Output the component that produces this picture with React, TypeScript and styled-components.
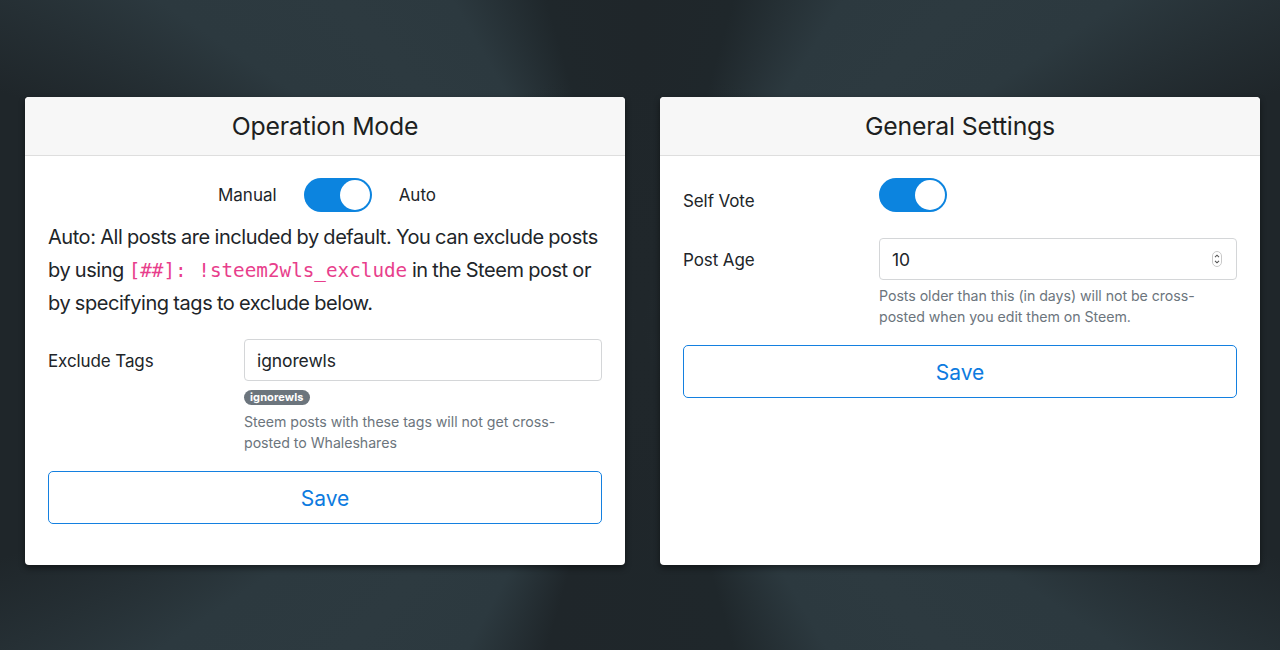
import React from "react";
import styled, { createGlobalStyle } from "styled-components";

const GlobalStyle = createGlobalStyle`
  html, body { margin: 0; padding: 0; }
  body {
    width: 1280px;
    height: 650px;
    overflow: hidden;
    font-family: Inter, "Noto Sans", "Liberation Sans", sans-serif;
    color: #212529;
    background-color: #1f262a;
    background-image:
      radial-gradient(circle at 50% 50%, #20272b 0px, rgba(32, 39, 43, 0.9) 90px, rgba(32, 39, 43, 0) 260px),
      conic-gradient(from 0deg at 50% 50%,
        #1f262a 0deg, #1f272b 16deg, #2c393f 32deg, #2d3a40 45deg, #2c393f 56deg, #1f262a 70deg,
        #1f262a 110deg, #2c393f 124deg, #2d3a40 137deg, #2c393f 150deg, #1f272b 164deg,
        #1f262a 196deg, #2c393f 208deg, #2d3a40 222deg, #2c393f 236deg, #1f262a 250deg,
        #1f262a 290deg, #2c393f 304deg, #2d3a40 317deg, #2c393f 330deg, #1f272b 344deg, #1f262a 360deg);
  }
`;

const Page = styled.main`
  display: grid;
  grid-template-columns: 600px 600px;
  column-gap: 35px;
  align-items: stretch;
  padding: 97px 0 0 25px;
  height: 468px;
`;

const Card = styled.section`
  background: #ffffff;
  border-radius: 4px;
  box-shadow: 0 3px 6px rgba(0, 0, 0, 0.45);
  display: flex;
  flex-direction: column;
  overflow: hidden;
`;

const CardHeader = styled.header`
  height: 58px;
  flex: none;
  background: #f7f7f7;
  border-bottom: 1px solid #dedede;
  display: flex;
  align-items: center;
  justify-content: center;
`;

const Title = styled.h2`
  margin: 0;
  font-size: 24.8px;
  font-weight: 400;
  letter-spacing: -0.2px;
  color: #1d1f21;
`;

const CardBody = styled.div`
  padding: 22px 23px 40px 23px;
  display: flex;
  flex-direction: column;
`;

const ToggleRow = styled.div`
  height: 34px;
  display: flex;
  align-items: center;
  justify-content: center;
  gap: 27px;
  font-size: 17px;
  padding-left: 4px;
`;

const Track = styled.span<{ $on: boolean }>`
  width: 68px;
  height: 34px;
  box-sizing: border-box;
  border-radius: 17px;
  background: ${(p) => (p.$on ? "#0c84df" : "#d6d6d6")};
  padding: 2px;
  display: flex;
  justify-content: ${(p) => (p.$on ? "flex-end" : "flex-start")};
  flex: none;
`;

const Knob = styled.span`
  width: 30px;
  height: 30px;
  border-radius: 50%;
  background: #ffffff;
`;

const Toggle = ({ on }: { on: boolean }) => (
  <Track $on={on}>
    <Knob />
  </Track>
);

const Paragraph = styled.p`
  margin: 9px 0 0 0;
  font-size: 20px;
  line-height: 33px;
  letter-spacing: -0.45px;
  word-spacing: -0.5px;
`;

const Code = styled.code`
  font-family: "DejaVu Sans Mono", "Liberation Mono", monospace;
  font-size: 19.3px;
  letter-spacing: 0;
  word-spacing: 0;
  white-space: nowrap;
  color: #e83e8c;
`;

const FieldRow = styled.div<{ $mt: number }>`
  display: grid;
  grid-template-columns: 196px 1fr;
  margin-top: ${(p) => p.$mt}px;
`;

const Label = styled.label<{ $pt: number }>`
  font-size: 17px;
  line-height: 25px;
  padding-top: ${(p) => p.$pt}px;
  letter-spacing: -0.1px;
`;

const Field = styled.div`
  display: flex;
  flex-direction: column;
  align-items: flex-start;
`;

const InputBox = styled.div`
  width: 100%;
  height: 42px;
  box-sizing: border-box;
  border: 1px solid #d4d6d8;
  border-radius: 4px;
  display: flex;
  align-items: center;
  padding: 0 14px 0 12px;
  background: #fff;
`;

const TextInput = styled.input`
  flex: 1;
  border: none;
  outline: none;
  padding: 0;
  font-family: inherit;
  font-size: 17.5px;
  color: #212529;
  background: transparent;
  letter-spacing: -0.1px;
`;

const Badge = styled.span`
  margin-top: 9px;
  height: 15px;
  padding: 0 6px;
  border-radius: 8px;
  background: #6c757d;
  color: #fff;
  font-size: 11px;
  font-weight: 700;
  line-height: 15px;
  letter-spacing: 0.1px;
`;

const Help = styled.small<{ $mt: number }>`
  display: block;
  margin-top: ${(p) => p.$mt}px;
  font-size: 14.2px;
  line-height: 21px;
  color: #6c757d;
  letter-spacing: -0.05px;
`;

const SaveButton = styled.button<{ $mt: number }>`
  margin-top: ${(p) => p.$mt}px;
  width: 100%;
  height: 53px;
  box-sizing: border-box;
  border: 1px solid #1480e0;
  border-radius: 5px;
  background: #fff;
  color: #0d7be0;
  font-family: inherit;
  font-size: 21px;
  padding-top: 3px;
  cursor: pointer;
`;

const Spinner = () => (
  <svg width="10" height="16" viewBox="0 0 10 16" aria-hidden>
    <rect x="0.5" y="0.5" width="9" height="15" rx="4.5" fill="#fff" stroke="#c9c9c9" />
    <path d="M3 6.2 L5 4.2 L7 6.2" fill="none" stroke="#555" strokeWidth="1.1" />
    <path d="M3 9.8 L5 11.8 L7 9.8" fill="none" stroke="#555" strokeWidth="1.1" />
  </svg>
);

export default function App() {
  return (
    <>
      <GlobalStyle />
      <Page>
        <Card>
          <CardHeader>
            <Title>Operation Mode</Title>
          </CardHeader>
          <CardBody>
            <ToggleRow>
              <span>Manual</span>
              <Toggle on />
              <span>Auto</span>
            </ToggleRow>
            <Paragraph>
              Auto: All posts are included by default. You can exclude posts by using{" "}
              <Code>[##]: !steem2wls_exclude</Code> in the Steem post or by specifying tags to exclude
              below.
            </Paragraph>
            <FieldRow $mt={19}>
              <Label $pt={10}>Exclude Tags</Label>
              <Field>
                <InputBox>
                  <TextInput defaultValue="ignorewls" />
                </InputBox>
                <Badge>ignorewls</Badge>
                <Help $mt={6}>
                  Steem posts with these tags will not get cross-
                  <br />
                  posted to Whaleshares
                </Help>
              </Field>
            </FieldRow>
            <SaveButton $mt={18}>Save</SaveButton>
          </CardBody>
        </Card>
        <Card>
          <CardHeader>
            <Title>General Settings</Title>
          </CardHeader>
          <CardBody>
            <FieldRow $mt={0}>
              <Label $pt={11}>Self Vote</Label>
              <Field>
                <Toggle on />
              </Field>
            </FieldRow>
            <FieldRow $mt={24}>
              <Label $pt={10}>Post Age</Label>
              <Field>
                <InputBox>
                  <TextInput defaultValue="10" />
                  <Spinner />
                </InputBox>
                <Help $mt={5}>
                  Posts older than this (in days) will not be cross-
                  <br />
                  posted when you edit them on Steem.
                </Help>
              </Field>
            </FieldRow>
            <SaveButton $mt={18}>Save</SaveButton>
          </CardBody>
        </Card>
      </Page>
    </>
  );
}
